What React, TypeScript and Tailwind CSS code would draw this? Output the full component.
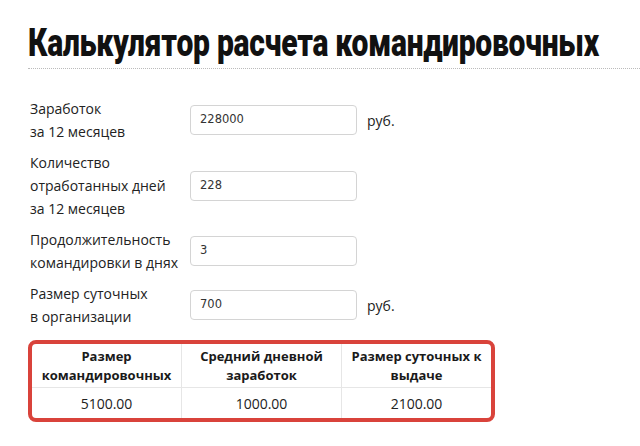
const fields = [
  { label: ['Заработок', 'за 12 месяцев'], value: '228000', unit: 'руб.' },
  { label: ['Количество', 'отработанных дней', 'за 12 месяцев'], value: '228', unit: '' },
  { label: ['Продолжительность', 'командировки в днях'], value: '3', unit: '' },
  { label: ['Размер суточных', 'в организации'], value: '700', unit: 'руб.' },
];

const results = [
  { title: 'Размер командировочных', value: '5100.00' },
  { title: 'Средний дневной заработок', value: '1000.00' },
  { title: 'Размер суточных к выдаче', value: '2100.00' },
];

export default function App() {
  return (
    <div className="w-[640px] h-[446px] bg-white overflow-hidden pl-[28px] font-['Open_Sans',sans-serif] text-[#222]">
      <div className="h-[68px] pt-[20px] overflow-hidden">
        <h1 className="inline-block origin-left scale-x-[0.79] text-[38px] leading-[46px] font-black text-[#111] font-['Roboto','Liberation_Sans',sans-serif] tracking-[-0.3px] whitespace-nowrap">
          Калькулятор расчета командировочных
        </h1>
      </div>
      <div className="border-t border-dotted border-[#bbb]" />

      <div className="pl-[2px] pt-[28px] flex flex-col gap-[8px]">
        {fields.map((f, i) => (
          <div key={i} className="flex items-center">
            <div className="w-[160px] text-[14px] leading-[23px] text-[#222]">
              {f.label.map((l, j) => (
                <div key={j}>{l}</div>
              ))}
            </div>
            <div className="w-[167px] h-[30px] rounded-[4px] border border-[#d4d4d4] bg-white flex items-center pl-[9px] text-[11.5px] text-[#333] font-['DejaVu_Sans',sans-serif]">
              {f.value}
            </div>
            {f.unit && <span className="ml-[10px] text-[14px] text-[#222]">{f.unit}</span>}
          </div>
        ))}
      </div>

      <div className="mt-[12px] w-[467px] rounded-[8px] border-[4px] border-[#d9433b] overflow-hidden">
        <div className="grid grid-cols-[149px_160px_150px]">
          {results.map((r, i) => (
            <div
              key={i}
              className={`h-[44px] flex items-center justify-center text-center text-[13px] leading-[19px] font-bold text-[#1a1a1a] border-b border-[#e6e6e6] px-[6px] ${i > 0 ? 'border-l' : ''}`}
            >
              {r.title}
            </div>
          ))}
          {results.map((r, i) => (
            <div
              key={i}
              className={`h-[30px] flex items-center justify-center text-[14px] text-[#222] border-[#e6e6e6] ${i > 0 ? 'border-l' : ''}`}
            >
              {r.value}
            </div>
          ))}
        </div>
      </div>
    </div>
  );
}
